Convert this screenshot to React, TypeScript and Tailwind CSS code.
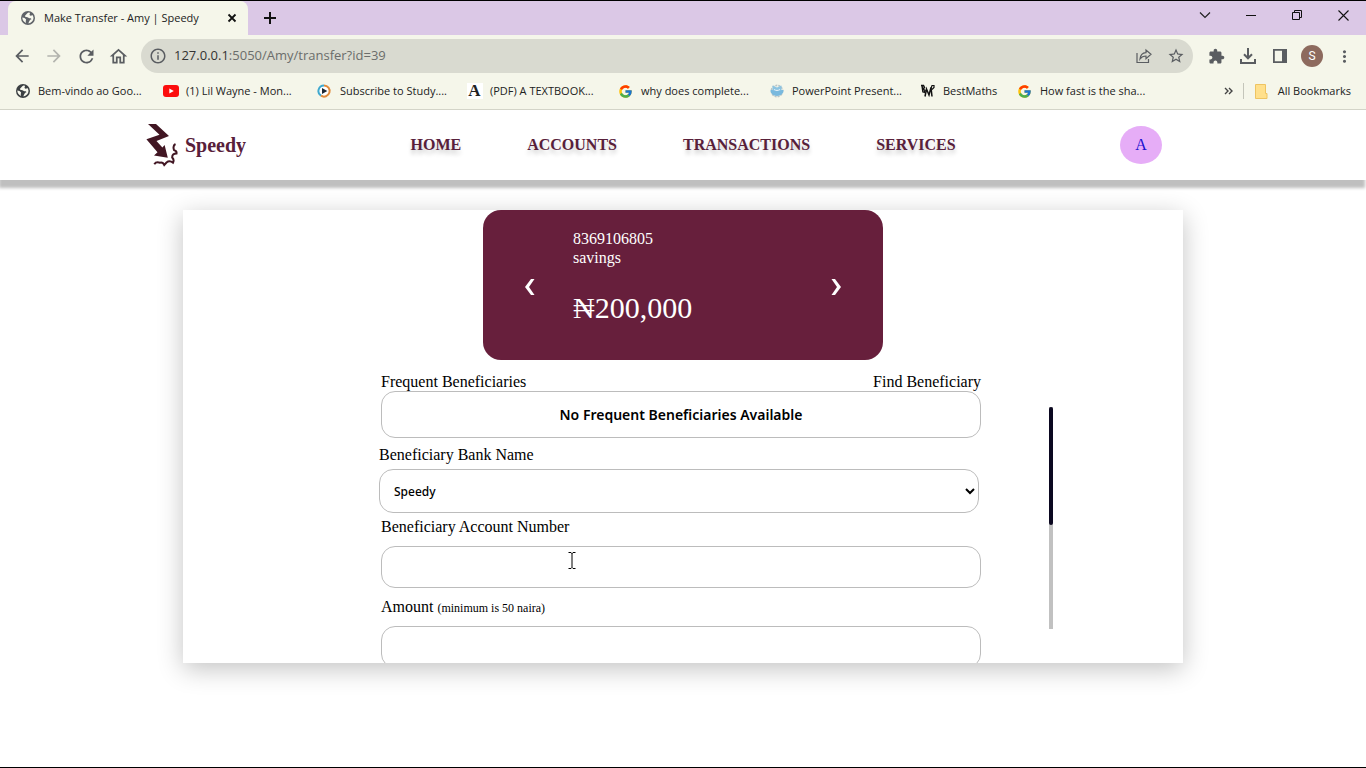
import React from "react";
import { FcGoogle } from "react-icons/fc";
import {
  MdArrowBack,
  MdArrowForward,
  MdRefresh,
  MdOutlineHome,
  MdInfoOutline,
  MdMoreVert,
  MdStarBorder,
} from "react-icons/md";

function GlobeIcon({ color }: { color: string }) {
  return (
    <svg width="16" height="16" viewBox="0 0 16 16" aria-hidden="true">
      <circle cx="8" cy="8" r="7" fill={color} />
      <path
        d="M8.500 2.600C6.500 3.300 6.600 4.800 5.200 5.600 4.600 6.400 5.200 7 6.400 6.900 8 6.900 8.200 8 9.600 8.200c1.400-.2 1.800.3 1.600 1.200-.6.700-1.500.5-1.800 1.400-.2 1-.8 1.200-.9 2.600 2.800-.4 4.900-2.600 5-5.400-.1-1.300-.6-2.100-1.200-2.900-.9.700-2.300.8-2.700-.2-.2-.9.600-1.200.4-2.100z"
        fill="#f8f9ee"
      />
      <path d="M2.300 7.600c1.600.2 3 .8 3.800 1.900 0 1-.5 1.200-.3 2.200l.3 1.400C3.700 12.200 2.300 10 2.300 7.600z" fill="#f8f9ee" />
    </svg>
  );
}

function YouTubeIcon() {
  return (
    <svg width="16" height="16" viewBox="0 0 16 16" aria-hidden="true">
      <rect x="0" y="2" width="16" height="12" rx="3" fill="#fc0d0d" />
      <path d="M6.300 5.400v5.200L10.800 8z" fill="#fff" />
    </svg>
  );
}

function PlayRingIcon() {
  return (
    <svg width="16" height="16" viewBox="0 0 16 16" aria-hidden="true">
      <circle cx="7" cy="8" r="5.600" fill="#fff" />
      <path d="M7 2.400a5.600 5.600 0 0 0-3 10.300" fill="none" stroke="#3fa9cf" strokeWidth="2" />
      <path d="M7 2.400a5.600 5.600 0 1 1-3 10.300" fill="none" stroke="#e08a3c" strokeWidth="2" />
      <path d="M5 4.900v6.200L10.300 8z" fill="#1c2733" />
    </svg>
  );
}

function LetterIcon() {
  return (
    <span className="flex h-4 w-4 items-center justify-center bg-white font-['Liberation_Serif',serif] text-[17px] leading-4 font-bold text-[#222]">
      A
    </span>
  );
}

function SlidesIcon() {
  return (
    <svg width="16" height="16" viewBox="0 0 16 16" aria-hidden="true">
      <circle cx="8" cy="8" r="5.600" fill="none" stroke="#b9c4c6" strokeWidth="1.600" strokeDasharray="2 1" />
      <path d="M1.500 7h13c0 3.800-2.600 5.900-6.500 5.900S1.500 10.800 1.500 7z" fill="#79b9de" />
      <path d="M3.500 7.500v-5L8 4.500l4.500-2v5z" fill="#8cc4e2" />
      <path d="M5 6.500c2 1.300 4 1.300 6 0" fill="none" stroke="#e9f4fa" strokeWidth="1" />
    </svg>
  );
}

function MathsIcon() {
  return (
    <svg width="16" height="16" viewBox="0 0 16 16" fill="none" stroke="#111" strokeWidth="1.500" aria-hidden="true">
      <path d="M1 2.500h2.500l1 2L3 6l2 1.500L4 10M2 2.500l1 7" />
      <path d="M5 13.500 6.500 6 9 12l2-7.500 1 9" />
      <path d="M11 5.500 12 2.500h2v2l-2 2" strokeWidth="1.200" />
    </svg>
  );
}

function SpeedyLogo() {
  return (
    <svg width="32" height="46" viewBox="0 0 32 46" aria-hidden="true">
      <path
        d="M2 2H10L23 14 10.500 19 16.400 25.400 18.600 23 21.800 35.800 8 33.500 11.500 30.200 0.400 17.300 13.500 12.800z"
        fill="#411623"
      />
      <path
        d="M29.500 22Q26.500 23.500 28 28Q31 29 30.500 31.500Q26 31.500 26.200 35.500Q28.500 38 27 40.700Q23.500 38 20.500 40.500L18.300 43Q17 40 14 40.700Q10 39.500 8.300 42.200"
        fill="none"
        stroke="#411623"
        strokeWidth="2"
      />
    </svg>
  );
}

const bookmarks = [
  { label: "Bem-vindo ao Goo...", icon: <GlobeIcon color="#3c4043" />, width: "w-[148px]" },
  { label: "(1) Lil Wayne - Mon...", icon: <YouTubeIcon />, width: "w-[154px]" },
  { label: "Subscribe to Study....", icon: <PlayRingIcon />, width: "w-[150px]" },
  { label: "(PDF) A TEXTBOOK...", icon: <LetterIcon />, width: "w-[151px]" },
  { label: "why does complete...", icon: <FcGoogle size={15} />, width: "w-[151px]" },
  { label: "PowerPoint Present...", icon: <SlidesIcon />, width: "w-[151px]" },
  { label: "BestMaths", icon: <MathsIcon />, width: "w-[97px]" },
  { label: "How fast is the sha...", icon: <FcGoogle size={15} />, width: "w-[151px]" },
];

function TabStrip() {
  return (
    <div className="flex h-[34px] items-stretch bg-[#dbc8e6] pl-2">
      <div className="flex w-60 items-center rounded-t-lg bg-[#f5f6ea] pr-2 pl-3">
        <GlobeIcon color="#5f6368" />
        <span className="ml-2 flex-1 text-[11px] whitespace-nowrap text-[#222]">Make Transfer - Amy | Speedy</span>
        <button aria-label="Close tab" className="flex h-4 w-4 items-center justify-center">
          <svg width="10" height="10" viewBox="0 0 10 10" stroke="#111" strokeWidth="1.800">
            <path d="M1.500 1.500l7 7M8.500 1.500l-7 7" />
          </svg>
        </button>
      </div>
      <button aria-label="New tab" className="ml-3 flex w-5 items-center justify-center">
        <svg width="12" height="12" viewBox="0 0 12 12" stroke="#111" strokeWidth="2">
          <path d="M6 0v12M0 6h12" />
        </svg>
      </button>
      <div className="ml-auto flex pb-[6px]">
        <button aria-label="Search tabs" className="flex w-[46px] items-center justify-center">
          <svg width="12" height="12" viewBox="0 0 12 12" fill="none" stroke="#222" strokeWidth="1.200">
            <path d="M1 3.500l5 5 5-5" />
          </svg>
        </button>
        <button aria-label="Minimize" className="flex w-[46px] items-center justify-center">
          <svg width="10" height="10" viewBox="0 0 10 10" fill="#111">
            <path d="M0 5h10v1H0z" />
          </svg>
        </button>
        <button aria-label="Restore" className="flex w-[46px] items-center justify-center">
          <svg width="10" height="10" viewBox="0 0 10 10" fill="none" stroke="#111">
            <path d="M.5 2.500h7v7h-7zM2.500 2.500v-2h7v7h-2" />
          </svg>
        </button>
        <button aria-label="Close window" className="flex w-[46px] items-center justify-center">
          <svg width="11" height="11" viewBox="0 0 11 11" fill="none" stroke="#111" strokeWidth="1.100">
            <path d="M.5.5l10 10M10.500.5l-10 10" />
          </svg>
        </button>
      </div>
    </div>
  );
}

const toolButton = "flex h-8 w-8 shrink-0 items-center justify-center";

function Toolbar() {
  return (
    <div className="flex h-[42px] items-center px-[6px] text-[#5a5d61]">
      <button aria-label="Back" className={toolButton}>
        <MdArrowBack size={20} />
      </button>
      <button aria-label="Forward" className="flex h-8 w-8 shrink-0 items-center justify-center text-[#b3b4ae]">
        <MdArrowForward size={20} />
      </button>
      <button aria-label="Reload" className={toolButton}>
        <MdRefresh size={21} />
      </button>
      <button aria-label="Home" className={toolButton}>
        <MdOutlineHome size={21} />
      </button>
      <div className="mr-[7px] ml-[7px] flex h-[34px] flex-1 items-center rounded-full bg-[#d9dad0] pr-[1px] pl-2">
        <MdInfoOutline size={18} />
        <div className="ml-[7px] flex-1 text-[13px] text-[#6b6d6b]">
          <span className="text-[#333]">127.0.0.1</span>:5050/Amy/transfer?id=39
        </div>
        <button aria-label="Share this page" className={toolButton}>
          <svg width="16" height="16" viewBox="0 0 16 16" fill="none" stroke="currentColor" strokeWidth="1.200">
            <path d="M1 5v9.500h11.500V11" />
            <path d="M4 11c.4-4 2.600-6.200 6-6.400V2l5 4.300-5 4.300V8C7.300 8 5.400 9 4 11z" />
          </svg>
        </button>
        <button aria-label="Bookmark this page" className={toolButton}>
          <MdStarBorder size={18} />
        </button>
      </div>
      <button aria-label="Extensions" className={toolButton}>
        <svg width="17" height="17" viewBox="0 0 24 24" fill="currentColor">
          <path d="M20.500 11H19V7c0-1.100-.9-2-2-2h-4V3.500C13 2.120 11.880 1 10.500 1S8 2.120 8 3.500V5H4c-1.100 0-2 .9-2 2v3.800h1.500c1.490 0 2.700 1.210 2.700 2.700s-1.210 2.700-2.700 2.700H2V20c0 1.100.9 2 2 2h3.800v-1.500c0-1.490 1.210-2.700 2.700-2.700s2.700 1.210 2.700 2.700V22H17c1.100 0 2-.9 2-2v-4h1.500c1.380 0 2.500-1.120 2.500-2.500S21.880 11 20.500 11z" />
        </svg>
      </button>
      <button aria-label="Downloads" className={toolButton}>
        <svg width="16" height="16" viewBox="0 0 16 16" fill="none" stroke="currentColor" strokeWidth="2">
          <path d="M8 0v10M4 6.300l4 4 4-4M1 11v4h14v-4" />
        </svg>
      </button>
      <button aria-label="Side panel" className={toolButton}>
        <svg width="14" height="14" viewBox="0 0 14 14" fill="currentColor">
          <path d="M0 0h14v14H0zM1.800 1.800v10.400H9V1.800z" fillRule="evenodd" />
        </svg>
      </button>
      <button aria-label="Profile" className={toolButton}>
        <span className="flex h-[22px] w-[22px] items-center justify-center rounded-full bg-[#8d6a5e] font-[Roboto,sans-serif] text-xs text-white">
          S
        </span>
      </button>
      <button aria-label="Menu" className={toolButton}>
        <MdMoreVert size={19} />
      </button>
    </div>
  );
}

function BookmarksBar() {
  return (
    <div className="flex items-center border-b border-[#d3d4c8] pr-[15px] pb-1 pl-[14px] text-[11px] whitespace-nowrap text-[#222]">
      {bookmarks.map((b) => (
        <a key={b.label} href="#" className={`flex h-7 shrink-0 items-center ${b.width}`}>
          <span className="mr-[7px] flex w-[17px] justify-center">{b.icon}</span>
          {b.label}
        </a>
      ))}
      <button aria-label="More bookmarks" className="mr-[6px] ml-auto px-1">
        <svg width="9" height="8" viewBox="0 0 9 8" fill="none" stroke="#444" strokeWidth="1.400">
          <path d="M1 1l3 3-3 3M5 1l3 3-3 3" />
        </svg>
      </button>
      <span className="mr-[11px] h-4 w-px bg-[#c4c5ba]" />
      <a href="#" className="flex h-7 items-center">
        <svg className="mr-[10px]" width="13" height="15" viewBox="0 0 13 15" aria-hidden="true">
          <path d="M.5.5h10v9h1.500v5H.5z" fill="#ffe08c" stroke="#eec462" />
        </svg>
        All Bookmarks
      </a>
    </div>
  );
}

const navLinks = ["HOME", "ACCOUNTS", "TRANSACTIONS", "SERVICES"];

function SiteHeader() {
  return (
    <header className="relative flex h-[70px] items-center justify-between bg-white pr-[204px] pl-[146px] shadow-[-1px_8px_3px_#bfbfbf]">
      <a href="#" className="flex items-center text-xl font-bold text-[#58203a]">
        <SpeedyLogo />
        <span className="ml-[7px]">Speedy</span>
      </a>
      <nav className="flex gap-[66px] font-bold text-[#58203a] [text-shadow:0_4px_4px_rgba(0,0,0,0.2)]">
        {navLinks.map((l) => (
          <a key={l} href="#">
            {l}
          </a>
        ))}
      </nav>
      <a href="#" className="flex h-[38px] w-[42px] items-center justify-center rounded-[50%] bg-[#e6adf7] text-[#1a0fd0]">
        A
      </a>
    </header>
  );
}

function AccountCard() {
  return (
    <section className="mx-auto flex h-[150px] w-[400px] items-start rounded-[18px] bg-[#671f3c] px-[41px] pt-[19px] text-white">
      <button aria-label="Previous account" className="mt-[50px] flex w-3 justify-center">
        <svg width="10" height="16" viewBox="0 0 10 16" fill="#fff">
          <path d="M6 0h3.500L4 8l5.500 8H6L0 8z" />
        </svg>
      </button>
      <div className="ml-[37px] flex-1">
        <p className="leading-[19px]">8369106805</p>
        <p className="leading-[19px]">savings</p>
        <p className="mt-[23px] text-[30px] leading-9">₦200,000</p>
      </div>
      <button aria-label="Next account" className="mt-[50px] flex w-3 justify-center">
        <svg width="10" height="16" viewBox="0 0 10 16" fill="#fff">
          <path d="M4 0H.5L6 8 .5 16H4l6-8z" />
        </svg>
      </button>
    </section>
  );
}

function TransferForm() {
  return (
    <form className="flex w-[602px] flex-col leading-[18px]">
      <div className="w-[600px] self-end">
        <div className="flex justify-between">
          <span>Frequent Beneficiaries</span>
          <a href="#">Find Beneficiary</a>
        </div>
        <p className="flex h-[47px] items-center justify-center rounded-[14px] border border-[#bcbcbc] font-['Noto_Sans',sans-serif] text-sm font-semibold">
          No Frequent Beneficiaries Available
        </p>
      </div>

      <div className="mt-2 flex w-[600px] flex-col">
        <label htmlFor="bank">Beneficiary Bank Name</label>
        <select
          id="bank"
          className="mt-[5px] h-11 rounded-[14px] border border-[#bcbcbc] bg-white pl-[10px] font-['Noto_Sans',sans-serif] text-xs font-medium text-black"
        >
          <option>Speedy</option>
        </select>
      </div>

      <div className="mt-[5px] flex w-[600px] flex-col self-end">
        <label htmlFor="account">Beneficiary Account Number</label>
        <div className="relative mt-[10px] flex">
          <input id="account" type="text" className="h-[42px] flex-1 rounded-[14px] border border-[#bcbcbc] px-4 outline-none" />
          <svg className="absolute top-[6px] left-[187px]" width="8" height="17" viewBox="0 0 8 17" fill="none" stroke="#000" aria-hidden="true">
            <path d="M.5.5h2.500l1 1 1-1h2.500M4 1v14.500M.5 16.500h2.500l1-1 1 1h2.500" />
          </svg>
        </div>
      </div>

      <div className="mt-[10px] flex w-[600px] flex-col self-end">
        <label htmlFor="amount">
          Amount <span className="text-xs leading-none">(minimum is 50 naira)</span>
        </label>
        <input id="amount" type="text" className="mt-[10px] h-[42px] rounded-[14px] border border-[#bcbcbc] px-4 outline-none" />
      </div>
    </form>
  );
}

export default function App() {
  return (
    <div className="flex min-h-screen flex-col border-y border-black bg-white font-['Liberation_Serif',serif] text-base text-black">
      <div className="bg-[#f5f6ea] font-['Open_Sans',sans-serif]">
        <TabStrip />
        <Toolbar />
        <BookmarksBar />
      </div>
      <SiteHeader />
      <main className="mx-auto mt-[30px] h-[453px] w-full max-w-[1000px] overflow-hidden bg-white shadow-[0_6px_24px_rgba(0,0,0,0.24)]">
        <AccountCard />
        <div className="flex items-start pt-[13px] pl-[196px]">
          <TransferForm />
          <div className="mt-[34px] ml-[68px] h-[222px] w-1 bg-[#c1c1c1]">
            <div className="h-[118px] rounded-sm bg-[#0b0820]" />
          </div>
        </div>
      </main>
    </div>
  );
}
